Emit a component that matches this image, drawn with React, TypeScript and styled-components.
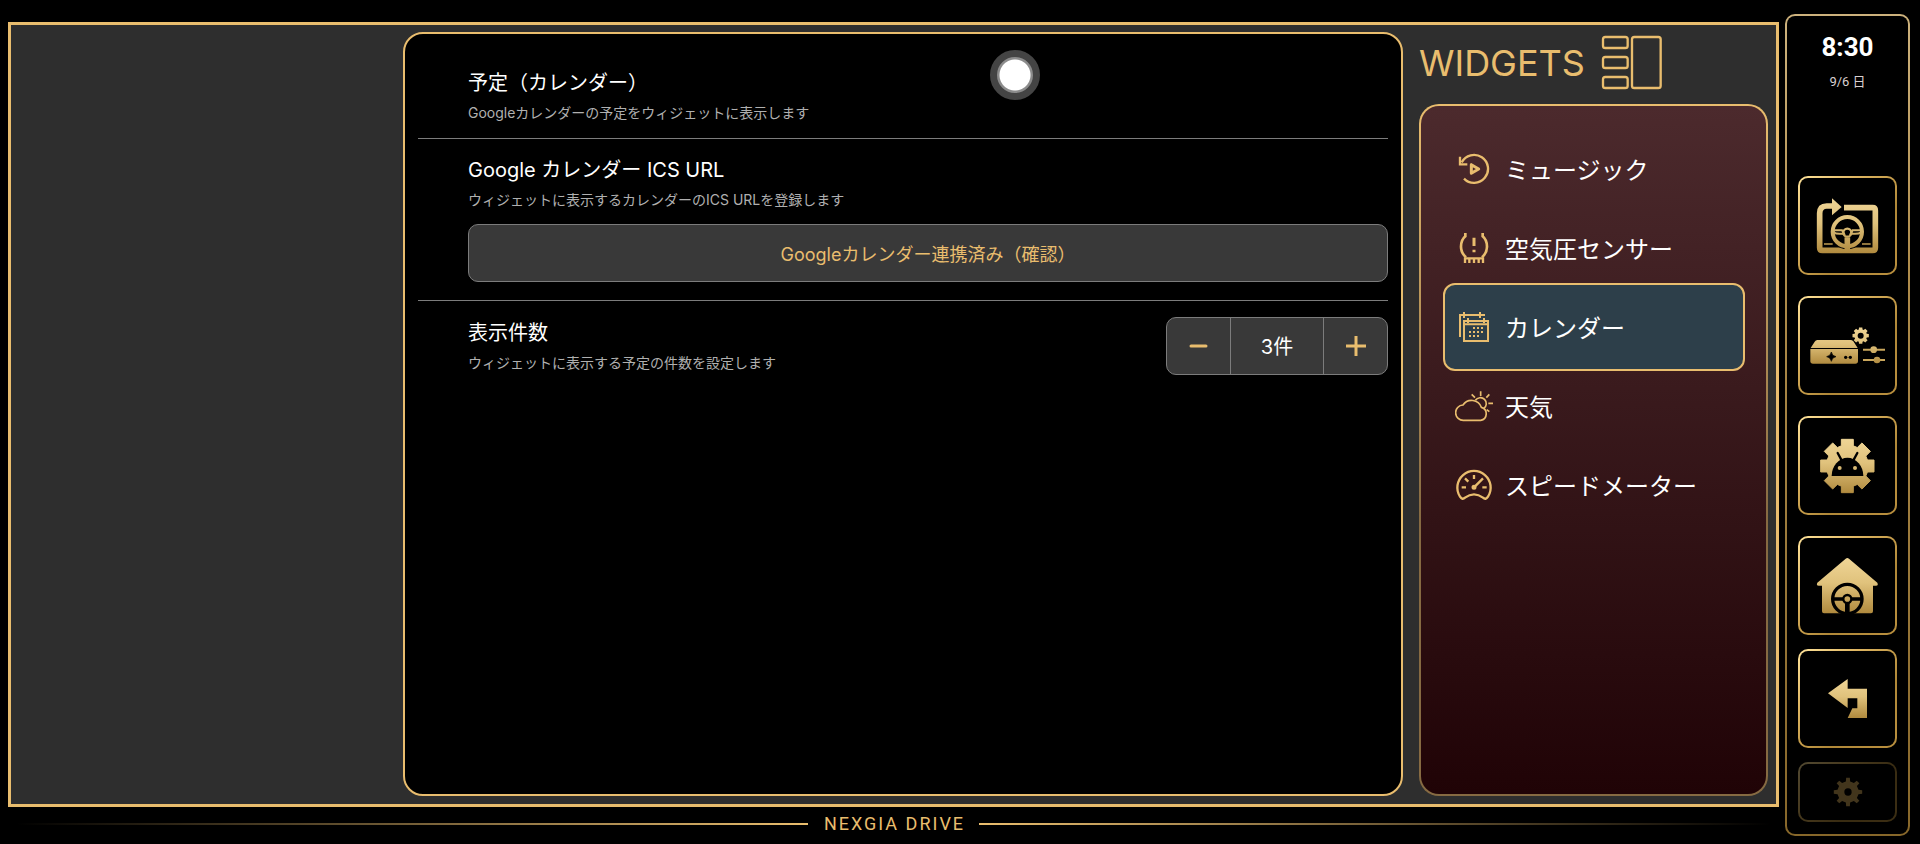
import React, { useState } from "react";
import styled, { createGlobalStyle, css } from "styled-components";

const GOLD = "#e9bd6e";
const LINE = "#7c7c7c";

const GlobalStyle = createGlobalStyle`
  *, *::before, *::after { box-sizing: border-box; }
  body {
    margin: 0;
    background: #000;
    color: #fff;
    font-family: Inter, "Noto Sans CJK JP", sans-serif;
  }
  h1, h2, p, ul { margin: 0; padding: 0; font-weight: 400; }
  ul { list-style: none; }
  button { font: inherit; color: inherit; margin: 0; padding: 0; cursor: pointer; }
  svg { display: block; flex: none; }
`;

const Page = styled.div`
  display: grid;
  grid-template-columns: minmax(0, 1fr) 125px;
  gap: 6px;
  min-height: 100vh;
  padding: 14px 10px 8px 8px;
`;

const Stage = styled.div`
  display: flex;
  flex-direction: column;
  padding-top: 8px;
`;

const Frame = styled.main`
  flex: 1;
  display: flex;
  gap: 16px;
  padding: 7px 8px 8px 0;
  border: 3px solid ${GOLD};
  background: #2e2e2e;
`;

const Workspace = styled.div`
  flex: 1;
  display: grid;
  grid-template-columns: minmax(0, 392fr) minmax(0, 1000fr);
`;

const Panel = styled.section`
  grid-column: 2;
  position: relative;
  padding: 0 13px;
  border: 2px solid ${GOLD};
  border-radius: 20px;
  background: #000;
`;

const Setting = styled.div<{ $first?: boolean; $row?: boolean }>`
  padding: ${(p) => (p.$first ? "35px 0 15px 50px" : "17px 0 18px 50px")};
  ${(p) => !p.$first && css`border-top: 1px solid ${LINE};`}
  ${(p) =>
    p.$row &&
    css`
      display: flex;
      align-items: center;
      justify-content: space-between;
      padding-top: 16px;
    `}
`;

const SettingTitle = styled.h2`
  font-size: 20px;
  line-height: 28px;
`;

const SettingNote = styled.p`
  margin-top: 6px;
  font-size: 14px;
  line-height: 20px;
  color: #b0b0b0;
`;

const LinkedButton = styled.button`
  display: block;
  width: 100%;
  height: 58px;
  margin-top: 14px;
  border: 1px solid ${LINE};
  border-radius: 10px;
  background: #393939;
  color: ${GOLD};
  font-size: 18px;
`;

const Stepper = styled.div`
  display: grid;
  grid-template-columns: 63px 94px 63px;
  height: 58px;
  border: 1px solid ${LINE};
  border-radius: 10px;
  background: #393939;
  overflow: hidden;
`;

const StepButton = styled.button`
  display: grid;
  place-items: center;
  border: 0;
  background: none;
  color: ${GOLD};
`;

const StepValue = styled.output`
  display: grid;
  place-items: center;
  padding-bottom: 2px;
  border: solid ${LINE};
  border-width: 0 1px;
  font-size: 20px;
`;

const TouchDot = styled.span`
  position: absolute;
  top: 16px;
  left: calc(50% + 87px);
  width: 50px;
  height: 50px;
  border: 7px solid #444;
  border-radius: 50%;
  background: radial-gradient(circle, #fff 15px, #8c8c8c 16px);
`;

const Side = styled.aside`
  width: 349px;
  display: flex;
  flex-direction: column;
`;

const SideHeader = styled.header`
  display: flex;
  align-items: center;
  gap: 16px;
  height: 72px;
  padding-bottom: 10px;
  color: ${GOLD};
`;

const SideTitle = styled.h1`
  font-size: 36px;
  line-height: 44px;
`;

const WidgetMenu = styled.nav`
  flex: 1;
  padding: 19px 21px 19px 22px;
  border: 2px solid transparent;
  border-radius: 20px;
  background:
    linear-gradient(#4c2a2d, #200306) padding-box,
    linear-gradient(${GOLD}, #866a42 60%) border-box;
`;

const WidgetButton = styled.button<{ $active: boolean }>`
  display: flex;
  align-items: center;
  gap: 10px;
  width: 100%;
  height: 88px;
  padding: 0 10px;
  border: 2px solid ${(p) => (p.$active ? GOLD : "transparent")};
  border-radius: 12px;
  background: ${(p) => (p.$active ? "#2d3f4a" : "transparent")};
  font-size: 24px;
  text-align: left;

  li + li & { margin-top: -9px; }
`;

const WidgetLabel = styled.span`
  padding-bottom: 2px;
`;

const Brand = styled.footer`
  display: grid;
  grid-template-columns: 1fr auto 1fr;
  align-items: center;
  gap: 13px;
  height: 29px;
  padding: 4px 8px 0;
  color: ${GOLD};
  font-family: Roboto, "Noto Sans CJK JP", sans-serif;
  font-size: 18px;
  line-height: 24px;
`;

const BrandName = styled.span`
  padding: 0 1px 0 3px;
  letter-spacing: 2px;
`;

const BrandRule = styled.span<{ $to: "left" | "right" }>`
  height: 2px;
  background: linear-gradient(to ${(p) => p.$to}, ${GOLD}, transparent);
`;

const Dock = styled.aside`
  display: flex;
  flex-direction: column;
  align-items: center;
  gap: 14px;
  padding: 15px 11px 12px;
  border: 2px solid transparent;
  border-radius: 10px;
  background:
    linear-gradient(#000, #000) padding-box,
    linear-gradient(#cdb27d, #b08d4c 30%, #87672a) border-box;
`;

const Clock = styled.div`
  flex: 1;
  min-height: 131px;
  font-family: Roboto, "Noto Sans CJK JP", sans-serif;
  text-align: center;
`;

const Time = styled.p`
  font-size: 26px;
  font-weight: 700;
  line-height: 32px;
`;

const Today = styled.p`
  margin-top: 9px;
  font-size: 13px;
  line-height: 20px;
  color: #d8d0d0;
`;

const DockGroup = styled.div`
  display: grid;
  gap: 21px;
`;

const DockButton = styled.button<{ $short?: boolean }>`
  display: grid;
  place-items: center;
  width: 99px;
  height: ${(p) => (p.$short ? 60 : 99)}px;
  border: 2px solid transparent;
  border-radius: 10px;
  background:
    linear-gradient(#000, #000) padding-box,
    linear-gradient(135deg, #ffe49c, #dfb662 30%, #b08838 65%, #b98f3e) border-box;

  &:disabled { opacity: 0.32; cursor: default; }
`;

/* ---- drawings ---- */

function gearPath(cx: number, cy: number, outer: number, inner: number, teeth: number, tip: number, root: number) {
  const points: string[] = [];
  for (let i = 0; i < teeth; i++) {
    const a = (i * 2 * Math.PI) / teeth - Math.PI / 2;
    [[inner, -root], [outer, -tip], [outer, tip], [inner, root]].forEach(([r, d]) => {
      points.push(`${(cx + r * Math.cos(a + d)).toFixed(1)} ${(cy + r * Math.sin(a + d)).toFixed(1)}`);
    });
  }
  return `M${points.join("L")}Z`;
}

function MenuIcon({ children, weight = 7 }: { children: React.ReactNode; weight?: number }) {
  return (
    <svg width="40" height="32" viewBox="0 0 120 96" fill="none" stroke={GOLD} strokeWidth={weight} aria-hidden="true">
      {children}
    </svg>
  );
}

const MusicIcon = () => (
  <MenuIcon>
    <path d="M20 28A42 42 0 1 1 27 77" />
    <path d="M15 11V34H37" />
    <path d="M49 35V61L71 48Z" strokeLinejoin="round" strokeWidth="9" />
  </MenuIcon>
);

const PressureIcon = () => (
  <MenuIcon weight={8}>
    <path d="M31 3V13Q18 24 18 44Q18 62 33 76M83 3V13Q96 24 96 44Q96 62 81 76" />
    <path d="M27 79H87M30 76V93M43 76V93M57 76V93M71 76V93M84 76V93" strokeWidth="7" />
    <path d="M57 17V42M57 53V61" strokeWidth="9" />
  </MenuIcon>
);

const CalendarIcon = () => (
  <MenuIcon weight={6}>
    <rect x="27" y="30" width="72" height="60" />
    <path d="M27 40H99M39 21V36M87 21V36M15 78V12H90M27 3V21M75 3V21" />
    <path d="M54 51H84M42 63H84M42 75H72" strokeDasharray="6 6" />
  </MenuIcon>
);

const WeatherIcon = () => (
  <MenuIcon weight={5}>
    <path d="M26 91H77A20 20 0 0 0 79 52A31 31 0 0 0 24 45A23 23 0 0 0 26 91Z" />
    <path d="M61 31A18 18 0 1 1 86 56" />
    <path d="M77 4V18M50 13L60 23M103 13L94 23M100 40H114M95 59L103 65" />
  </MenuIcon>
);

const SpeedIcon = () => (
  <MenuIcon>
    <path d="M15 83A50 50 0 1 1 99 83Q92 94 84 86Q57 66 30 86Q22 94 15 83Z" />
    <path d="M57 18V30M20 55H33M82 55H95M30 28L40 38M57 55L84 28" />
    <circle cx="57" cy="55" r="4" />
  </MenuIcon>
);

const WidgetsIcon = () => (
  <svg width="62" height="56" viewBox="0 0 186 168" fill="none" stroke={GOLD} strokeWidth="7" aria-hidden="true">
    <rect x="6" y="6" width="74" height="33" rx="7" />
    <rect x="6" y="66" width="74" height="33" rx="7" />
    <rect x="6" y="126" width="74" height="33" rx="7" />
    <rect x="93" y="6" width="86" height="153" rx="7" />
  </svg>
);

function DockIcon({ id, from, to, children }: { id: string; from: number; to: number; children: React.ReactNode }) {
  return (
    <svg width="95" height="95" viewBox="0 0 285 285" fill={`url(#${id})`} aria-hidden="true">
      <defs>
        <linearGradient id={id} gradientUnits="userSpaceOnUse" x1="0" x2="0" y1={from} y2={to}>
          <stop offset="0" stopColor="#efd596" />
          <stop offset="0.45" stopColor="#e0c27c" />
          <stop offset="1" stopColor="#b08a3e" />
        </linearGradient>
      </defs>
      {children}
    </svg>
  );
}

const ScreenIcon = () => (
  <DockIcon id="gold-screen" from={62} to={226}>
    <path
      d="M132 89H218Q226 89 226 98V209Q226 217 218 217H67Q59 217 59 209V106Q59 84 80 84H98"
      fill="none" stroke="url(#gold-screen)" strokeWidth="17"
    />
    <path d="M96 61L125 87L96 112Z" />
    <circle cx="142" cy="161" r="53" fill="#000" />
    <g fill="none" stroke="url(#gold-screen)">
      <circle cx="142" cy="161" r="44" strokeWidth="12" />
      <circle cx="142" cy="164" r="12" strokeWidth="7" />
      <path d="M101 157H126L132 167H124Q108 168 101 163ZM183 157H158L152 167H160Q176 168 183 163Z" strokeWidth="6" />
      <path d="M142 178V222" strokeWidth="17" />
      <path d="M72 198H98M186 198H212" strokeWidth="5" />
    </g>
  </DockIcon>
);

const UnitIcon = () => (
  <DockIcon id="gold-unit" from={88} to={198}>
    <path d="M52 126H152Q156 126 160 130L173 150H32L44 131Q47 126 52 126Z" />
    <path d="M31 153H174V189Q174 197 166 197H39Q31 197 31 189Z" />
    <path d="M94 162Q96 174 108 176Q96 178 94 190Q92 178 80 176Q92 174 94 162Z" fill="#000" stroke="#000" strokeWidth="2" />
    <circle cx="137" cy="178" r="5" fill="#000" />
    <circle cx="151" cy="178" r="5" fill="#000" />
    <path d={gearPath(182, 113, 25, 19, 8, 0.2, 0.3)} />
    <circle cx="182" cy="113" r="9" fill="#000" />
    <path d="M189 155H255M189 186H255" stroke="#c9a65c" strokeWidth="6" />
    <circle cx="221" cy="155" r="10" />
    <circle cx="231" cy="186" r="10" />
  </DockIcon>
);

const AndroidGearIcon = () => (
  <DockIcon id="gold-android" from={60} to={226}>
    <path d={gearPath(142, 144, 82, 63, 8, 0.22, 0.29)} stroke="url(#gold-android)" strokeWidth="3" strokeLinejoin="round" />
    <path d="M95 174A47 54 0 0 1 190 174Z" fill="#000" />
    <path d="M113 105L125 127M172 105L160 127" stroke="#000" strokeWidth="7" strokeLinecap="round" />
    <circle cx="119" cy="150" r="6" />
    <circle cx="165" cy="150" r="6" />
  </DockIcon>
);

const HomeIcon = () => (
  <DockIcon id="gold-home" from={60} to={226}>
    <path d="M137 62Q142 58 147 62L232 134Q236 143 228 143H219V220Q219 226 213 226H72Q66 226 66 220V143H56Q48 143 52 134Z" />
    <g fill="none" stroke="#000">
      <circle cx="142" cy="183" r="44" strokeWidth="10" />
      <path d="M98 183H130M154 183H186" strokeWidth="10" />
      <path d="M142 196V228" strokeWidth="14" />
      <circle cx="142" cy="183" r="12" strokeWidth="7" />
    </g>
  </DockIcon>
);

const BackIcon = () => (
  <DockIcon id="gold-back" from={84} to={201}>
    <path d="M84 127L143 84V113H201V201H143L157 172H172V142H143V171Z" />
  </DockIcon>
);

const GearIcon = () => (
  <svg width="30" height="30" viewBox="0 0 90 90" fill="#cda557" aria-hidden="true">
    <path d={gearPath(45, 45, 43, 32, 8, 0.13, 0.2)} />
    <circle cx="45" cy="45" r="11" fill="#000" />
  </svg>
);

const WIDGETS = [
  { id: "music", label: "ミュージック", Icon: MusicIcon },
  { id: "pressure", label: "空気圧センサー", Icon: PressureIcon },
  { id: "calendar", label: "カレンダー", Icon: CalendarIcon },
  { id: "weather", label: "天気", Icon: WeatherIcon },
  { id: "speed", label: "スピードメーター", Icon: SpeedIcon },
];

export default function App() {
  const [active, setActive] = useState("calendar");
  const [count, setCount] = useState(3);

  return (
    <>
      <GlobalStyle />
      <Page>
        <Stage>
          <Frame>
            <Workspace>
              <Panel>
                <Setting $first>
                  <SettingTitle>予定（カレンダー）</SettingTitle>
                  <SettingNote>Googleカレンダーの予定をウィジェットに表示します</SettingNote>
                </Setting>
                <Setting>
                  <SettingTitle>Google カレンダー ICS URL</SettingTitle>
                  <SettingNote>ウィジェットに表示するカレンダーのICS URLを登録します</SettingNote>
                  <LinkedButton type="button">Googleカレンダー連携済み（確認）</LinkedButton>
                </Setting>
                <Setting $row>
                  <div>
                    <SettingTitle id="count-label">表示件数</SettingTitle>
                    <SettingNote>ウィジェットに表示する予定の件数を設定します</SettingNote>
                  </div>
                  <Stepper role="group" aria-labelledby="count-label">
                    <StepButton type="button" aria-label="減らす" onClick={() => setCount(Math.max(1, count - 1))}>
                      <svg width="20" height="20" viewBox="0 0 20 20" stroke="currentColor" strokeWidth="3" strokeLinecap="round">
                        <path d="M2 10H17" />
                      </svg>
                    </StepButton>
                    <StepValue>{`${count}件`}</StepValue>
                    <StepButton type="button" aria-label="増やす" onClick={() => setCount(count + 1)}>
                      <svg width="20" height="20" viewBox="0 0 20 20" stroke="currentColor" strokeWidth="3">
                        <path d="M0 10H20M10 0V20" />
                      </svg>
                    </StepButton>
                  </Stepper>
                </Setting>
                <TouchDot aria-hidden="true" />
              </Panel>
            </Workspace>
            <Side>
              <SideHeader>
                <SideTitle>WIDGETS</SideTitle>
                <WidgetsIcon />
              </SideHeader>
              <WidgetMenu>
                <ul>
                  {WIDGETS.map(({ id, label, Icon }) => (
                    <li key={id}>
                      <WidgetButton
                        type="button"
                        $active={id === active}
                        aria-current={id === active}
                        onClick={() => setActive(id)}
                      >
                        <Icon />
                        <WidgetLabel>{label}</WidgetLabel>
                      </WidgetButton>
                    </li>
                  ))}
                </ul>
              </WidgetMenu>
            </Side>
          </Frame>
          <Brand>
            <BrandRule $to="left" />
            <BrandName>NEXGIA DRIVE</BrandName>
            <BrandRule $to="right" />
          </Brand>
        </Stage>
        <Dock>
          <Clock>
            <Time>8:30</Time>
            <Today>9/6 日</Today>
          </Clock>
          <DockGroup>
            <DockButton type="button" aria-label="画面切替"><ScreenIcon /></DockButton>
            <DockButton type="button" aria-label="ユニット設定"><UnitIcon /></DockButton>
            <DockButton type="button" aria-label="Android設定"><AndroidGearIcon /></DockButton>
            <DockButton type="button" aria-label="ホーム"><HomeIcon /></DockButton>
          </DockGroup>
          <DockButton type="button" aria-label="戻る"><BackIcon /></DockButton>
          <DockButton type="button" aria-label="設定" $short disabled><GearIcon /></DockButton>
        </Dock>
      </Page>
    </>
  );
}
